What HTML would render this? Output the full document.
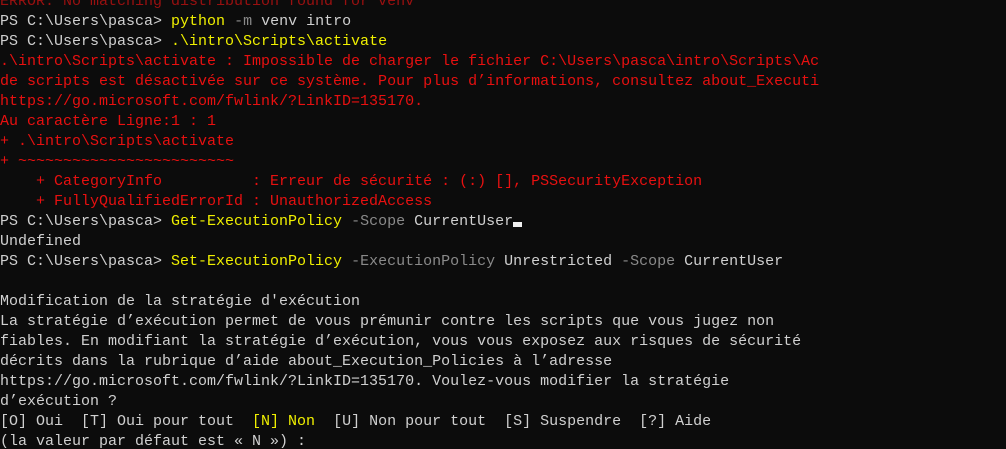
<!DOCTYPE html>
<html><head><meta charset="utf-8"><style>
html,body{margin:0;padding:0;background:#0c0c0c;width:1006px;height:449px;overflow:hidden}
pre{margin:-8px 0 0 0;font-family:"Liberation Mono",monospace;font-size:15px;line-height:20px;color:#d0d0d0;white-space:pre}
.r{color:#e81010}.y{color:#f0f000}.g{color:#8a8a8a}.d{color:#9a1010}
.c{display:inline-block;width:9px;height:5px;background:#f0f0f0;vertical-align:-2px}
</style></head><body><pre><span class="d">ERROR: No matching distribution found for venv</span>
PS C:\Users\pasca> <span class="y">python</span> <span class="g">-m</span> venv intro
PS C:\Users\pasca> <span class="y">.\intro\Scripts\activate</span>
<span class="r">.\intro\Scripts\activate : Impossible de charger le fichier C:\Users\pasca\intro\Scripts\Ac
de scripts est désactivée sur ce système. Pour plus d’informations, consultez about_Executi
https://go.microsoft.com/fwlink/?LinkID=135170.
Au caractère Ligne:1 : 1
+ .\intro\Scripts\activate
+ ~~~~~~~~~~~~~~~~~~~~~~~~
    + CategoryInfo          : Erreur de sécurité : (:) [], PSSecurityException
    + FullyQualifiedErrorId : UnauthorizedAccess</span>
PS C:\Users\pasca> <span class="y">Get-ExecutionPolicy</span> <span class="g">-Scope</span> CurrentUser<span class="c"></span>
Undefined
PS C:\Users\pasca> <span class="y">Set-ExecutionPolicy</span> <span class="g">-ExecutionPolicy</span> Unrestricted <span class="g">-Scope</span> CurrentUser

Modification de la stratégie d'exécution
La stratégie d’exécution permet de vous prémunir contre les scripts que vous jugez non
fiables. En modifiant la stratégie d’exécution, vous vous exposez aux risques de sécurité
décrits dans la rubrique d’aide about_Execution_Policies à l’adresse
https://go.microsoft.com/fwlink/?LinkID=135170. Voulez-vous modifier la stratégie
d’exécution ?
[O] Oui  [T] Oui pour tout  <span class="y">[N] Non</span>  [U] Non pour tout  [S] Suspendre  [?] Aide
(la valeur par défaut est « N ») :</pre></body></html>
